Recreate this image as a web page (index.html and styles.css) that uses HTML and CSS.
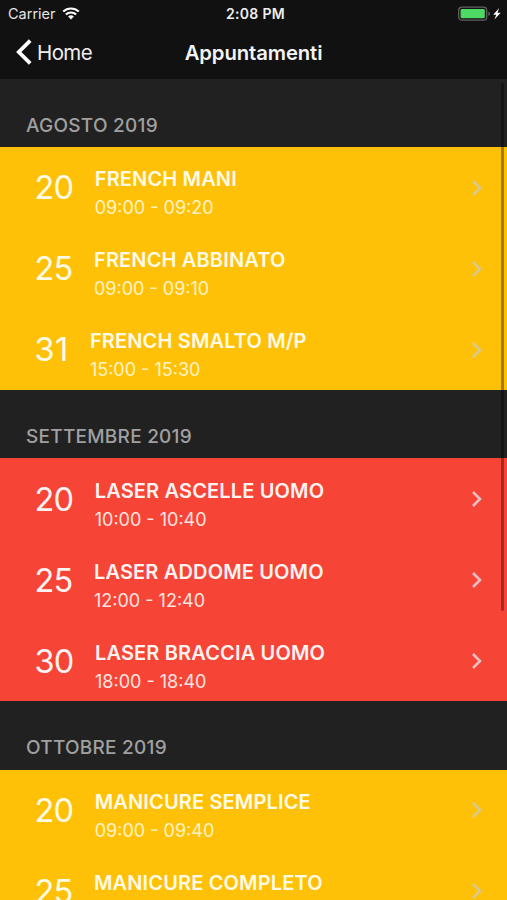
FILE: index.html
```html
<!DOCTYPE html>
<html lang="it">
<head>
    <meta charset="UTF-8">
    <title>Appuntamenti</title>
    <link rel="stylesheet" href="styles.css">
</head>
<body>
    <div id="container">
        <div id="header">
            <div class="status">
                <div class="left">
                    <span class="carrier">Carrier</span>
                    <svg class="wifi" width="18" height="13" viewBox="0 0 18 13">
                        <path d="M1.2 4.6a11.2 11.2 0 0 1 15.6 0M3.9 7.5a7.4 7.4 0 0 1 10.2 0" fill="none" stroke="#fff" stroke-width="2.1"/>
                        <path d="M9 12.6L6.1 9.6a4.2 4.2 0 0 1 5.8 0z" fill="#fff"/>
                    </svg>
                </div>
                <span class="clock">2:08 PM</span>
                <svg class="battery" width="45" height="16" viewBox="0 0 45 16">
                    <rect x=".7" y="1.2" width="28" height="13" rx="3.2" fill="none" stroke="#626264" stroke-width="1.3"/>
                    <rect x="2.6" y="3.1" width="24.2" height="9.2" rx="1.4" fill="#4cd964"/>
                    <path d="M30.3 5.4v4.6q1.7-.7 1.7-2.3t-1.7-2.3z" fill="#626264"/>
                    <path d="M41.2 2l-6 6.7h3.1L36.4 13.6l6.3-6.8h-3.3z" fill="#fff"/>
                </svg>
            </div>
            <div class="nav">
                <a class="back" href="#">
                    <svg width="17" height="28" viewBox="0 0 17 28"><path d="M15.2 2.6L3.8 14l11.4 11.4" fill="none" stroke="#fff" stroke-width="3.8"/></svg>
                    <span>Home</span>
                </a>
                <h1>Appuntamenti</h1>
            </div>
        </div>
        <div id="content">
            <h2>AGOSTO 2019</h2>
            <ul class="yellow">
                <li>
                    <span class="day">20</span>
                    <div class="info"><h3>FRENCH MANI</h3><p>09:00 - 09:20</p></div>
                    <svg class="arrow" width="12" height="18" viewBox="0 0 12 18"><path d="M2 2l7 7-7 7"/></svg>
                </li>
                <li>
                    <span class="day">25</span>
                    <div class="info"><h3>FRENCH ABBINATO</h3><p>09:00 - 09:10</p></div>
                    <svg class="arrow" width="12" height="18" viewBox="0 0 12 18"><path d="M2 2l7 7-7 7"/></svg>
                </li>
                <li>
                    <span class="day narrow">31</span>
                    <div class="info"><h3>FRENCH SMALTO M/P</h3><p>15:00 - 15:30</p></div>
                    <svg class="arrow" width="12" height="18" viewBox="0 0 12 18"><path d="M2 2l7 7-7 7"/></svg>
                </li>
            </ul>
            <h2>SETTEMBRE 2019</h2>
            <ul class="red">
                <li>
                    <span class="day">20</span>
                    <div class="info"><h3>LASER ASCELLE UOMO</h3><p>10:00 - 10:40</p></div>
                    <svg class="arrow" width="12" height="18" viewBox="0 0 12 18"><path d="M2 2l7 7-7 7"/></svg>
                </li>
                <li>
                    <span class="day">25</span>
                    <div class="info"><h3>LASER ADDOME UOMO</h3><p>12:00 - 12:40</p></div>
                    <svg class="arrow" width="12" height="18" viewBox="0 0 12 18"><path d="M2 2l7 7-7 7"/></svg>
                </li>
                <li>
                    <span class="day">30</span>
                    <div class="info"><h3>LASER BRACCIA UOMO</h3><p>18:00 - 18:40</p></div>
                    <svg class="arrow" width="12" height="18" viewBox="0 0 12 18"><path d="M2 2l7 7-7 7"/></svg>
                </li>
            </ul>
            <h2>OTTOBRE 2019</h2>
            <ul class="yellow">
                <li>
                    <span class="day">20</span>
                    <div class="info"><h3>MANICURE SEMPLICE</h3><p>09:00 - 09:40</p></div>
                    <svg class="arrow" width="12" height="18" viewBox="0 0 12 18"><path d="M2 2l7 7-7 7"/></svg>
                </li>
                <li>
                    <span class="day">25</span>
                    <div class="info"><h3>MANICURE COMPLETO</h3></div>
                    <svg class="arrow" width="12" height="18" viewBox="0 0 12 18"><path d="M2 2l7 7-7 7"/></svg>
                </li>
            </ul>
            <div class="scrollbar"></div>
        </div>
    </div>
</body>
</html>
```
FILE: styles.css
```css
*{
    margin: 0;
    padding: 0;
    box-sizing: border-box;
}
ul{
    list-style: none;
}
a{
    text-decoration: none;
}
body{
    background: #212121;
    font-family: Inter, "Liberation Sans", sans-serif;
    color: #fff;
}
#container{
    height: 900px;
    overflow: hidden;
}
#header{
    height: 79px;
    background: #111;
}
.status{
    display: grid;
    grid-template-columns: 1fr auto 1fr;
    align-items: center;
    height: 27px;
    padding: 0 4px 0 8px;
    font-size: 14.5px;
}
.status .left{
    display: flex;
    align-items: center;
    gap: 6px;
    color: #e4e4e4;
}
.clock{
    font-weight: 600;
    font-size: 14px;
    letter-spacing: .3px;
    color: #eee;
}
.battery{
    justify-self: end;
}
.nav{
    display: grid;
    grid-template-columns: 1fr auto 1fr;
    align-items: center;
    height: 50px;
    padding: 0 15px;
}
.back{
    display: flex;
    align-items: center;
    gap: 5px;
    font-size: 20.5px;
    letter-spacing: -.6px;
    color: #eee;
}
.nav h1{
    font-size: 20.3px;
    font-weight: 600;
    letter-spacing: -.1px;
    color: #f4f4f4;
}
#content{
    position: relative;
}
#content h2{
    height: 68.2px;
    padding: 34px 0 0 26px;
    line-height: 26px;
    font-size: 19px;
    letter-spacing: .25px;
    font-weight: 500;
    color: #a0a0a0;
}
#content li{
    display: flex;
    height: 81px;
    padding: 0 24px 0 34.5px;
}
.yellow{
    background: #ffc107;
    color: #fffbe6;
}
.red{
    background: #f64436;
    color: #fff3f2;
}
.day{
    padding-top: 21.3px;
    line-height: 40px;
    font-size: 32.5px;
    letter-spacing: -.7px;
    font-weight: 400;
}
.day.narrow{
    letter-spacing: .4px;
}
.info{
    flex: 1;
    padding-top: 19.2px;
    margin-left: 21.3px;
}
.info h3{
    line-height: 27px;
    font-size: 20px;
    letter-spacing: .15px;
    font-weight: 600;
}
.info p{
    line-height: 29px;
    font-size: 18px;
}
.yellow p{
    color: #fff3c4;
}
.red p{
    color: #ffe4e1;
}
.arrow{
    margin-top: 31.5px;
    fill: none;
    stroke-width: 2.6;
}
.yellow .arrow{
    stroke: #d7c98f;
}
.red .arrow{
    stroke: #e3bfc0;
}
/* scroll indicator over the list */
.scrollbar{
    position: absolute;
    top: 4px;
    right: 3px;
    width: 3px;
    height: 528px;
    border-radius: 2px;
    background: rgba(0, 0, 0, .35);
}
```
